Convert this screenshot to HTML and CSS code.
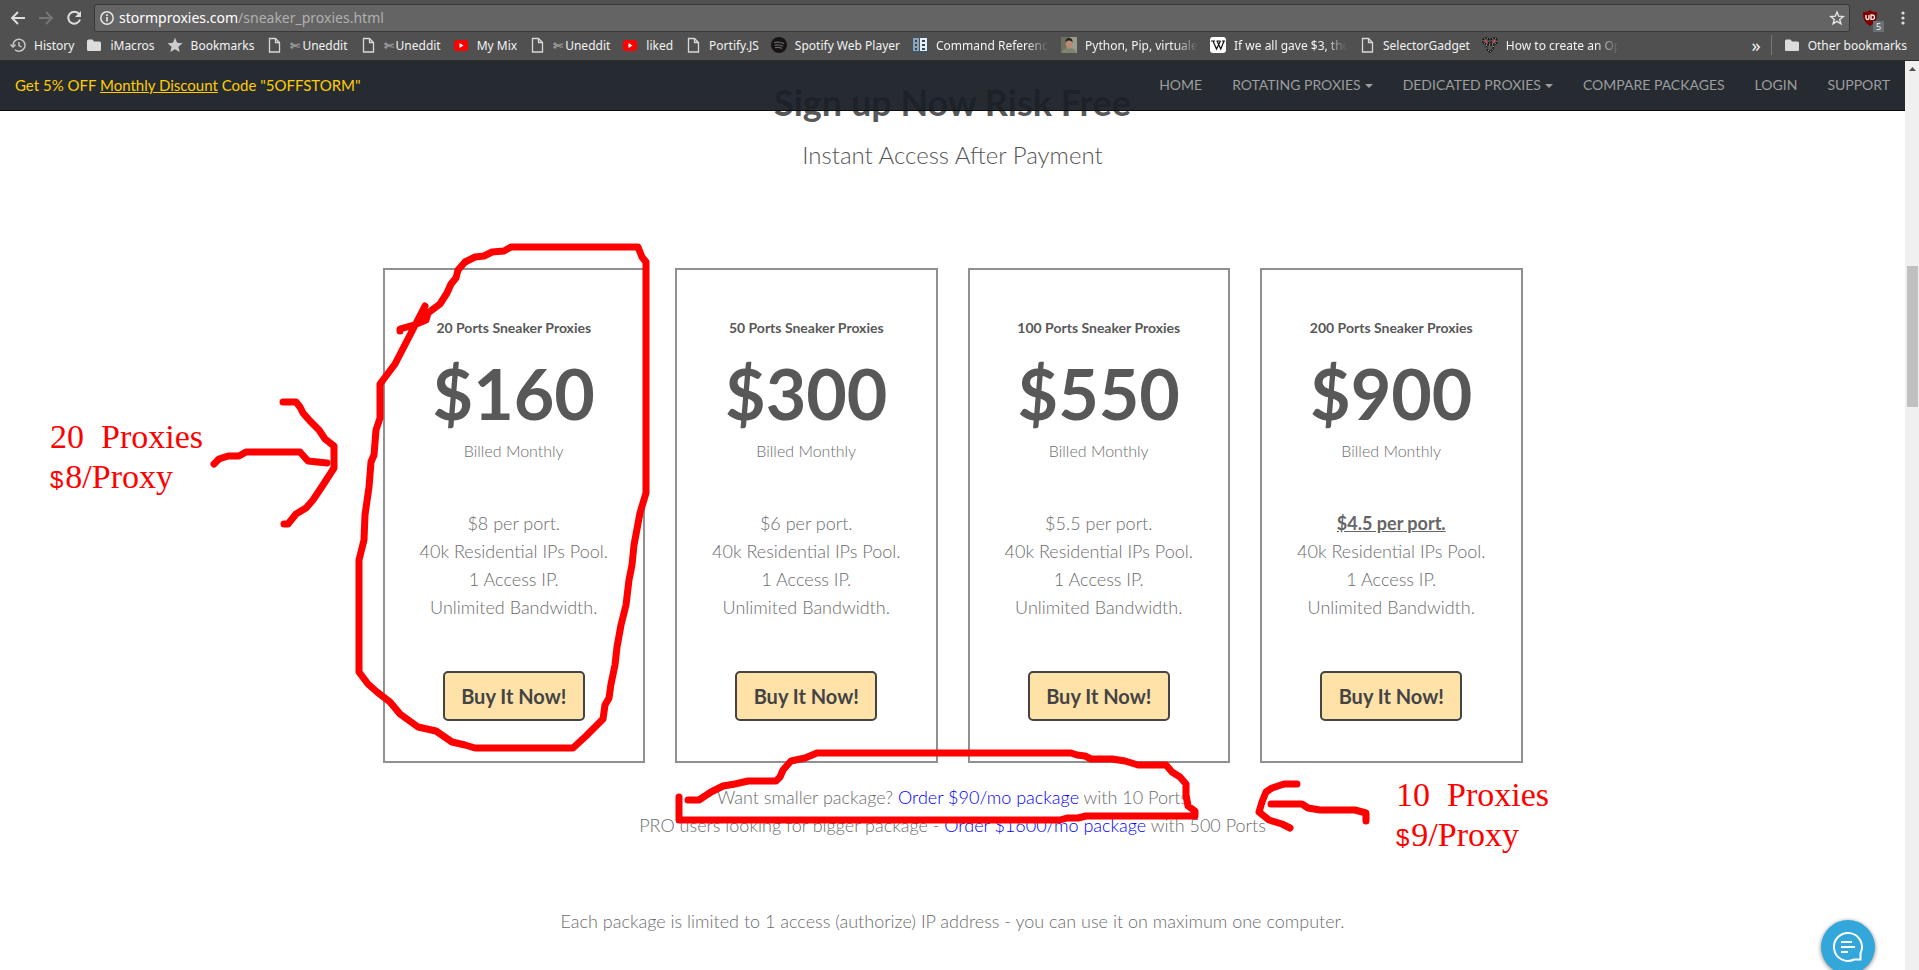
FILE: index.html
```html
<!DOCTYPE html>
<html lang="en">
<head>
<meta charset="utf-8">
<title>Sneaker Proxies</title>
<link rel="stylesheet" href="styles.css">
</head>
<body>
<svg class="defs" aria-hidden="true">
  <symbol id="doc" viewBox="0 0 16 16"><path d="M3.5 1.5h6l4 4v9.500h-10zM9.500 1.500v4h4" fill="none" stroke="#d8d8d8" stroke-width="1.300"/></symbol>
  <symbol id="folder" viewBox="0 0 16 16"><path d="M1 4q0-1.500 1.500-1.500h4l1.500 2h5.500q1.500 0 1.500 1.500v7q0 1-1.500 1h-11q-1.500 0-1.500-1z" fill="#dcdcdc"/></symbol>
  <symbol id="youtube" viewBox="0 0 16 16"><rect x="1" y="3" width="14" height="11" rx="2.500" fill="#f00"/><path d="M6.500 6v5l4-2.500z" fill="#fff"/></symbol>
</svg>

<header class="browser">
  <div class="toolbar">
    <button class="tool" aria-label="Back"><svg viewBox="0 0 16 16"><path d="M15 8H2M8 2L2 8l6 6" fill="none" stroke="#dedede" stroke-width="1.900"/></svg></button>
    <button class="tool" aria-label="Forward"><svg viewBox="0 0 16 16"><path d="M1 8h13M8 2l6 6-6 6" fill="none" stroke="#777" stroke-width="1.900"/></svg></button>
    <button class="tool" aria-label="Reload"><svg viewBox="0 0 16 16"><path d="M13.200 4.200A6 6 0 1 0 14 9.500" fill="none" stroke="#dedede" stroke-width="2"/><path d="M15 1v6H9z" fill="#dedede"/></svg></button>
    <div class="address">
      <svg class="info" viewBox="0 0 16 16"><circle cx="8" cy="8" r="6.200" fill="none" stroke="#e4e4e4" stroke-width="1.500"/><path d="M8 7v4.500M8 4.300v1.700" stroke="#e4e4e4" stroke-width="1.700"/></svg>
      <span class="url"><b>stormproxies.com</b>/sneaker_proxies.html</span>
      <button class="tool" aria-label="Bookmark this page"><svg viewBox="0 0 16 16"><path d="M8 2l1.700 4.200 4.500.300-3.500 2.900 1.200 4.400L8 11.400l-3.900 2.400 1.200-4.400L1.800 6.500l4.500-.3z" fill="none" stroke="#e6e6e6" stroke-width="1.400"/></svg></button>
    </div>
    <button class="tool shield" aria-label="Content blocker"><svg viewBox="0 0 16 16"><path d="M8 0c2 1.700 4 2 7 2 0 6-.5 10-7 14C1.500 12 1 8 1 2c3 0 5-.3 7-2z" fill="#800000"/><path d="M4 5v3q0 1.500 1.500 1.500T7 8V5M9 5v4.400q3.500.3 3.500-2.200T9 5z" fill="none" stroke="#fff" stroke-width="1.300"/></svg><span class="count">5</span></button>
    <button class="tool" aria-label="Menu"><svg viewBox="0 0 16 16"><g fill="#dedede"><circle cx="8" cy="3" r="1.600"/><circle cx="8" cy="8" r="1.600"/><circle cx="8" cy="13" r="1.600"/></g></svg></button>
  </div>
  <nav class="bookmarks" aria-label="Bookmarks">
    <a href="#"><svg viewBox="0 0 16 16"><path d="M3 8.500A6 6 0 1 1 5 12.700M.500 7.500L3 10l2.500-2.500M9 5v3.500l2.500 1.500" fill="none" stroke="#ccc" stroke-width="1.400"/></svg><span>History</span></a>
    <a href="#"><svg><use href="#folder"/></svg><span>iMacros</span></a>
    <a href="#"><svg viewBox="0 0 16 16"><path d="M8 .8l2.100 5 5.400.4-4.100 3.500 1.300 5.300L8 12.200 3.300 15l1.300-5.300L.5 6.200l5.400-.4z" fill="#ccc"/></svg><span>Bookmarks</span></a>
    <a href="#"><svg><use href="#doc"/></svg><span><i>✄</i>Uneddit</span></a>
    <a href="#"><svg><use href="#doc"/></svg><span><i>✄</i>Uneddit</span></a>
    <a href="#"><svg><use href="#youtube"/></svg><span>My Mix</span></a>
    <a href="#"><svg><use href="#doc"/></svg><span><i>✄</i>Uneddit</span></a>
    <a href="#"><svg><use href="#youtube"/></svg><span>liked</span></a>
    <a href="#"><svg><use href="#doc"/></svg><span>Portify.JS</span></a>
    <a href="#"><svg viewBox="0 0 16 16"><circle cx="8" cy="8" r="8" fill="#191414"/><path d="M3 5.700q5-1.500 10 1M3.500 8.300q4.500-1.200 8.500 1M4 10.700q4-1 7 .8" fill="none" stroke="#666" stroke-width="1.300"/></svg><span>Spotify Web Player</span></a>
    <a href="#"><svg viewBox="0 0 16 16"><path d="M0 0h16v16H0z" fill="#3f5363"/><path d="M1 1h6v13H1z" fill="#8ba3b5"/><path d="M8 1h7v13H8z" fill="#e8eef2"/><path d="M3 3h2v2H3zM3 7h2v2H3zM3 11h2v2H3z" fill="#33475a"/><path d="M10 3h3v2h-3zM10 7h3v2h-3zM10 11h3v2h-3z" fill="#33475a"/></svg><span class="fade">Command Reference</span></a>
    <a href="#"><svg viewBox="0 0 16 16"><path d="M0 0h16v16H0z" fill="#6d705f"/><path d="M9 0h7v16H9z" fill="#9a9b90"/><path d="M1 16q0-5 7-5t7 5z" fill="#7d8570"/><ellipse cx="8" cy="7" rx="3.300" ry="5" fill="#b98a72"/><path d="M4.500 6q-.5-5 3.500-5t3.500 5Q11 3.500 8 3.500T4.500 6z" fill="#2a211d"/></svg><span class="fade">Python, Pip, virtualenv</span></a>
    <a href="#"><svg viewBox="0 0 16 16"><rect width="16" height="16" rx="3" fill="#fff"/><path d="M1 4h4M6.500 4h4M12 4h3M3 4l3.500 8L10.500 4M7 4l3.800 8L14 4" fill="none" stroke="#111" stroke-width="1.200"/></svg><span class="fade">If we all gave $3, the fund</span></a>
    <a href="#"><svg><use href="#doc"/></svg><span>SelectorGadget</span></a>
    <a href="#"><svg viewBox="0 0 16 16"><g fill="#555" stroke="#111" stroke-width="1.500"><circle cx="4" cy="4" r="3"/><circle cx="12" cy="4" r="3"/><path d="M4 8h8l-1 4-3 3-3-3z"/></g><g fill="none" stroke="#ccc" stroke-dasharray="1 2"><circle cx="4" cy="4" r="3"/><circle cx="12" cy="4" r="3"/><path d="M4 8h8l-1 4-3 3-3-3z"/></g><path d="M3 3l2 3M13 3l-2 3" stroke="#e44" stroke-width="1.500"/></svg><span class="fade">How to create an Open</span></a>
    <button class="more" aria-label="More bookmarks">»</button>
    <a class="other" href="#"><svg><use href="#folder"/></svg><span>Other bookmarks</span></a>
  </nav>
</header>

<div class="viewport">
  <div class="page">
    <nav class="site-nav">
      <p>Get 5% OFF <u>Monthly Discount</u> Code "5OFFSTORM"</p>
      <ul>
        <li><a href="#">HOME</a></li>
        <li><a class="caret" href="#">ROTATING PROXIES</a></li>
        <li><a class="caret" href="#">DEDICATED PROXIES</a></li>
        <li><a href="#">COMPARE PACKAGES</a></li>
        <li><a href="#">LOGIN</a></li>
        <li><a href="#">SUPPORT</a></li>
      </ul>
    </nav>
    <main>
      <h2>Sign up Now Risk Free</h2>
      <p class="sub">Instant Access After Payment</p>
      <div class="plans">
        <section class="plan">
          <h3>20 Ports Sneaker Proxies</h3>
          <strong class="price">$160</strong>
          <p class="billed">Billed Monthly</p>
          <ul><li>$8 per port.</li><li>40k Residential IPs Pool.</li><li>1 Access IP.</li><li>Unlimited Bandwidth.</li></ul>
          <button class="buy">Buy It Now!</button>
        </section>
        <section class="plan">
          <h3>50 Ports Sneaker Proxies</h3>
          <strong class="price">$300</strong>
          <p class="billed">Billed Monthly</p>
          <ul><li>$6 per port.</li><li>40k Residential IPs Pool.</li><li>1 Access IP.</li><li>Unlimited Bandwidth.</li></ul>
          <button class="buy">Buy It Now!</button>
        </section>
        <section class="plan">
          <h3>100 Ports Sneaker Proxies</h3>
          <strong class="price">$550</strong>
          <p class="billed">Billed Monthly</p>
          <ul><li>$5.5 per port.</li><li>40k Residential IPs Pool.</li><li>1 Access IP.</li><li>Unlimited Bandwidth.</li></ul>
          <button class="buy">Buy It Now!</button>
        </section>
        <section class="plan">
          <h3>200 Ports Sneaker Proxies</h3>
          <strong class="price">$900</strong>
          <p class="billed">Billed Monthly</p>
          <ul><li class="best">$4.5 per port.</li><li>40k Residential IPs Pool.</li><li>1 Access IP.</li><li>Unlimited Bandwidth.</li></ul>
          <button class="buy">Buy It Now!</button>
        </section>
      </div>
      <p class="note">Want smaller package? <a href="#">Order $90/mo package</a> with 10 Ports<br>PRO users looking for bigger package - <a href="#">Order $1600/mo package</a> with 500 Ports</p>
      <p class="limit">Each package is limited to 1 access (authorize) IP address - you can use it on maximum one computer.</p>
    </main>
    <button class="chat" aria-label="Open chat"><svg viewBox="0 0 32 32" fill="none" stroke="#fff" stroke-width="2"><path d="M28.500 22.200A14 14 0 1 0 22.200 28.500H28.500zM9 11h11M9 16h14M9 21h7"/></svg></button>
  </div>
  <div class="scrollbar" aria-hidden="true"><svg viewBox="0 0 14 14"><path d="M4 10h7L7.500 6z" fill="#505050"/></svg><div class="thumb"></div></div>
</div>

<div class="markup">
  <svg viewBox="0 0 1919 970">
    <path d="M425 306L395 364 380 384V418L376 430 374 455 371 462 369 487 365 515 364 540 359 560V672L368 684 377 692 390 702 400 714 418 727 436 731 452 742 465 745 475 748H573L586 736 603 719 605 705 609 698 611 684 615 665 617 647 621 625 626 605 629 580 632 565 634 545 640 513 646 493V262L642 257 638 247H511L504 251 492 252 484 256 475 257 465 262 458 270 456 278 451 284 447 293 440 304 428 313 426 320 414 325 400 329V331"/>
    <path d="M214 464L219 459 228 456H239L246 452H300L308 461 327 463"/>
    <path d="M283 402H296L300 407 303 413 310 421 319 430 325 439 334 446V468L323 485 313 500 306 508 296 514 288 524H284"/>
    <path d="M688 800H699L711 792 723 786 735 784 748 781H776L780 777 783 770 791 761 805 758 817 753H1071L1077 755 1085 756 1091 759H1112L1125 761 1138 765H1166L1172 772 1180 777 1186 784V795L1188 806 1195 811V816H1086L1078 818H1067L1060 820H679V797"/>
    <path d="M1297 784H1284L1272 788 1266 792 1262 802 1259 812 1269 820 1282 824 1290 828"/>
    <path d="M1271 804H1302L1308 808 1320 810H1355L1366 813V821"/>
  </svg>
  <p class="label label-left">20 &nbsp;Proxies<br><small>$</small>8/Proxy</p>
  <p class="label label-right">10 &nbsp;Proxies<br><small>$</small>9/Proxy</p>
</div>
</body>
</html>
```
FILE: styles.css
```css
* { box-sizing: border-box; }
body { margin: 0; height: 100vh; display: flex; flex-direction: column; overflow: hidden; position: relative; background: #fff; font-family: Lato, sans-serif; }
p, h2, h3, ul { margin: 0; padding: 0; }
ul { list-style: none; }
button { font: inherit; margin: 0; padding: 0; border: 0; background: none; color: inherit; }
.defs { position: absolute; width: 0; height: 0; }

.browser { background: #505050; color: #f2f2f2; font-family: "Noto Sans", sans-serif; border-bottom: 1px solid #2d2d2d; }
.toolbar { display: flex; align-items: center; gap: 12px; padding: 4px 8px 0 10px; }
.tool { display: flex; width: 16px; height: 16px; position: relative; }
.tool svg, .info { width: 16px; height: 16px; flex: none; }
.address { flex: 1; display: flex; align-items: center; gap: 4px; height: 28px; padding: 0 4px; background: #646464; border: 1px solid #3a3a3a; border-radius: 3px; }
.url { flex: 1; font-size: 14px; line-height: 20px; color: #b0b0b0; }
.url b { font-weight: 400; color: #fff; }
.shield { margin-right: 5px; }
.count { position: absolute; right: -6px; bottom: -6px; width: 11px; height: 11px; background: #6a7075; font-size: 9px; line-height: 11px; text-align: center; }
.bookmarks { display: flex; align-items: center; gap: 12px; height: 28px; padding: 0 12px 2px 10px; font-size: 12px; white-space: nowrap; }
.bookmarks a { display: flex; align-items: center; gap: 8px; color: inherit; text-decoration: none; }
.bookmarks svg { width: 16px; height: 16px; flex: none; }
.bookmarks i { font-style: normal; color: #ccc; margin-right: 2px; }
.fade { width: 113px; overflow: hidden; -webkit-mask-image: linear-gradient(90deg, #000 80%, transparent); mask-image: linear-gradient(90deg, #000 80%, transparent); }
.more { margin-left: auto; font-size: 18px; line-height: 20px; padding-right: 10px; }

.viewport { flex: 1; display: flex; min-height: 0; }
.page { flex: 1; position: relative; overflow: hidden; }
.site-nav { position: absolute; inset: 0 0 auto 0; display: flex; justify-content: space-between; align-items: center; height: 50px; padding-left: 15px; background: rgba(25, 32, 38, .95); border-bottom: 1px solid #090c0f; }
.site-nav p { color: #fc0; font-size: 15px; line-height: 20px; padding-bottom: 2px; }
.site-nav ul { display: flex; font-size: 14px; }
.site-nav a { display: block; padding: 14px 15px 16px; line-height: 20px; color: #9d9d9d; text-decoration: none; }
.caret::after { content: ""; display: inline-block; margin-left: 4px; vertical-align: middle; border: 4px solid transparent; border-top-color: currentColor; border-bottom: 0; }
.more { border-right: 1px solid #777; }

main { text-align: center; color: #6c6c6c; font-weight: 300; font-size: 18px; line-height: 28px; padding-top: 21px; }
h2 { font-size: 36px; line-height: 40px; font-weight: 700; color: #585858; }
.sub { font-size: 24px; line-height: 28px; margin-top: 19px; color: #555; }
.plans { display: grid; grid-template-columns: repeat(4, 1fr); gap: 30px; max-width: 1140px; margin: 99px auto 0; }
.plan { border: 2px solid #909090; padding: 48px 0 40px; }
h3 { font-size: 14px; line-height: 20px; color: #585858; font-weight: 700; }
.price { display: block; font-size: 70px; line-height: 80px; margin-top: 15px; color: #585858; font-weight: 700; }
.billed { font-size: 16px; line-height: 24px; margin-top: 6px; }
.plan ul { margin-top: 46px; }
.best { font-weight: 700; text-decoration: underline; color: #666; }
.buy { width: 142px; height: 50px; margin-top: 50px; border: 2px solid #444; border-radius: 5px; background: #ffe2a8; color: #444; font-size: 20px; font-weight: 700; }
.note { margin-top: 20px; }
.note a { color: #00f; text-decoration: none; }
.limit { margin-top: 68px; }
.chat { position: absolute; right: 30px; bottom: -4px; width: 54px; height: 54px; border-radius: 50%; background: #33a7d9; box-shadow: 0 1px 4px rgba(0, 0, 0, .5); display: grid; place-items: center; }
.chat svg { width: 32px; height: 32px; }
.scrollbar { width: 14px; background: #f0f0f0; }
.scrollbar svg { display: block; width: 14px; height: 14px; }
.thumb { height: 141px; margin: 191px 1px 0 2px; background: #c0c0c0; }

.markup { position: absolute; inset: 0; pointer-events: none; color: #f00; }
.markup svg { width: 100%; height: 100%; fill: none; stroke: #f00; stroke-width: 7; stroke-linecap: round; stroke-linejoin: round; }
.label { position: absolute; font: 34px/40px "Liberation Serif", serif; white-space: nowrap; }
.label small { font: 24px/24px "Liberation Sans", sans-serif; margin-right: 2px; }
.label-left { left: 50px; top: 417px; }
.label-right { left: 1396px; top: 775px; }
```
